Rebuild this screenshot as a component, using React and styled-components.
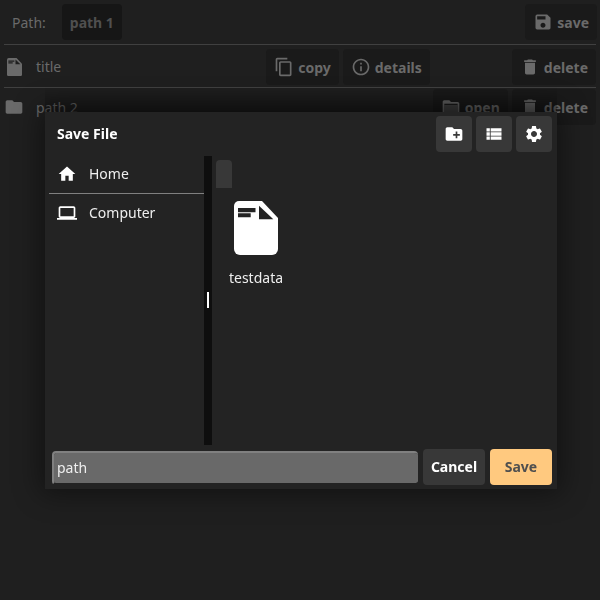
import styled, { createGlobalStyle } from 'styled-components'
import {
  MdContentCopy,
  MdInfoOutline,
  MdDelete,
  MdSave,
  MdFolder,
  MdCreateNewFolder,
  MdViewList,
  MdSettings,
  MdHome,
  MdLaptop,
} from 'react-icons/md'

const GlobalStyle = createGlobalStyle`
  html, body {
    margin: 0;
    height: 100%;
    background: #1f1f1f;
    overflow: hidden;
  }
  body, input, button {
    font-family: "Noto Sans", sans-serif;
  }
`

// Page behind the dialog
const Page = styled.div`
  width: 600px;
  height: 600px;
  box-sizing: border-box;
  padding: 4px 4px 0;
  color: #6a6a6a;
`

const Row = styled.div`
  display: flex;
  align-items: center;
  gap: 4px;
  height: 36px;
`

const Divider = styled.div`
  height: 1px;
  background: #404040;
  margin: ${(p) => p.$m || '0'};
`

const PathLabel = styled.span`
  font-size: 14px;
  margin: 0 12px 0 8px;
`

const BgButton = styled.button`
  display: flex;
  align-items: center;
  gap: 4px;
  height: 36px;
  box-sizing: border-box;
  padding: 0 8px;
  margin-right: ${(p) => p.$mr || '0'};
  border: 0;
  border-radius: 4px;
  background: ${(p) => (p.$dark ? '#161616' : '#1a1a1a')};
  color: ${(p) => (p.$dark ? '#4f4f4f' : '#6a6a6a')};
  font-size: 14px;
  font-weight: 700;
  svg {
    font-size: 20px;
    flex: none;
  }
`

const RowIcon = styled.span`
  display: flex;
  justify-content: center;
  width: 20px;
  font-size: 20px;
`

const RowTitle = styled.span`
  font-size: 14px;
  margin: 0 0 ${(p) => p.$lift || '0'} 8px;
`

const Spacer = styled.div`
  flex: ${(p) => (p.$w ? `0 0 ${p.$w}` : 1)};
`

// Dialog
const DialogLayer = styled.div`
  position: fixed;
  left: 45px;
  top: 112px;
`

const Dialog = styled.div`
  position: relative;
  width: 512px;
  height: 377px;
  display: flex;
  flex-direction: column;
  background: #232323;
  color: #fff;
  box-shadow: 0 0 26px 4px rgba(0, 0, 0, 0.45);
  &::before {
    content: '';
    position: absolute;
    left: 0;
    right: 0;
    top: -25px;
    height: 25px;
    background: linear-gradient(rgba(0, 0, 0, 0), rgba(0, 0, 0, 0.3));
  }
`

const Header = styled.div`
  display: flex;
  align-items: center;
  gap: 4px;
  height: 36px;
  padding: 4px 5px 0 12px;
`

const Title = styled.div`
  flex: 1;
  font-size: 14px;
  font-weight: 700;
  padding-bottom: 2px;
`

const HeadButton = styled.button`
  display: flex;
  align-items: center;
  justify-content: center;
  width: 36px;
  height: 36px;
  padding: 0;
  border: 0;
  border-radius: 4px;
  background: #383838;
  color: #fff;
  font-size: 20px;
`

const Body = styled.div`
  flex: 1;
  display: flex;
  padding: 3px 0 4px 4px;
  min-height: 0;
`

const Sidebar = styled.div`
  width: 155px;
  display: flex;
  flex-direction: column;
`

const Place = styled.div`
  display: flex;
  align-items: center;
  gap: 12px;
  height: 38px;
  padding-left: 8px;
  border-bottom: ${(p) => (p.$line ? '1px solid #808080' : '0')};
  svg {
    font-size: 20px;
    color: #fff;
    flex: none;
  }
`

const PlaceLabel = styled.span`
  font-size: 14px;
  color: #eee;
  padding-bottom: 2px;
`

const Track = styled.div`
  width: 8px;
  height: 289px;
  margin-top: 1px;
  display: flex;
  justify-content: center;
  padding-top: 136px;
  box-sizing: border-box;
  background: #0e0e0e;
`

const Thumb = styled.div`
  width: 2px;
  height: 16px;
  background: #fff;
`

const Files = styled.div`
  flex: 1;
  display: flex;
  flex-direction: column;
  padding: 5px 0 0 4px;
`

const UpButton = styled.div`
  width: 16px;
  height: 28px;
  border-radius: 4px 4px 0 0;
  background: #383838;
`

const FileTile = styled.div`
  width: 80px;
  margin-top: 13px;
  display: flex;
  flex-direction: column;
  align-items: center;
  gap: 13px;
  font-size: 14px;
  color: #eee;
`

const Footer = styled.div`
  display: flex;
  align-items: center;
  gap: 5px;
  height: 36px;
  padding: 0 5px 4px 7px;
`

const PathInput = styled.input`
  flex: 1;
  min-width: 0;
  height: 34px;
  margin-top: 2px;
  box-sizing: border-box;
  padding: 0 0 1px 3px;
  border: 0;
  border-top: 2px solid #808080;
  border-left: 2px solid #808080;
  border-bottom: 2px solid transparent;
  border-radius: 4px;
  background: #696969;
  background-clip: padding-box;
  color: #eee;
  font-size: 14px;
  outline: none;
`

const ActionButton = styled.button`
  width: 62px;
  height: 36px;
  padding: 0 0 2px;
  border: 0;
  border-radius: 4px;
  background: ${(p) => (p.$primary ? '#ffc97f' : '#383838')};
  color: ${(p) => (p.$primary ? '#4f4f4f' : '#fff')};
  font-size: 14px;
  font-weight: 700;
`

function FileIcon({ size, body = '#fff', ink = '#232323' }) {
  return (
    <svg width={size} height={(size * 54) / 44} viewBox="0 0 44 54">
      <path
        d="M5 0H28L44 17V48a6 6 0 0 1-6 6H6a6 6 0 0 1-6-6V5a5 5 0 0 1 5-5Z"
        fill={body}
      />
      <path d="M4 7H21.5V11.3H4ZM4 12.3H16.7V16.3H4Z" fill={ink} />
      <path d="M25 4.7V18.3H39.3Z" fill={ink} />
    </svg>
  )
}

// open folder with a filled front, no package icon has these strokes
function OpenFolderIcon() {
  return (
    <svg width="1em" height="1em" viewBox="0 0 24 24" fill="currentColor">
      <path d="M20 6h-8l-2-2H4c-1.1 0-2 .9-2 2v12c0 1.1.9 2 2 2h16c1.1 0 2-.9 2-2V8c0-1.1-.9-2-2-2zm0 12H4V8h16v10z" />
      <path d="M4 9.5h16V18H4z" opacity="0.55" />
    </svg>
  )
}

export default function App() {
  return (
    <>
      <GlobalStyle />
      <Page>
        <Row>
          <PathLabel>Path:</PathLabel>
          <BgButton $dark>path 1</BgButton>
          <Spacer />
          <BgButton $mr="-1px">
            <MdSave />
            save
          </BgButton>
        </Row>
        <Divider $m="4px 0" />
        <Row>
          <RowIcon>
            <FileIcon size={15} body="#6a6a6a" ink="#1f1f1f" />
          </RowIcon>
          <RowTitle $lift="2px">title</RowTitle>
          <Spacer />
          <BgButton>
            <MdContentCopy />
            copy
          </BgButton>
          <BgButton>
            <MdInfoOutline />
            details
          </BgButton>
          <Spacer $w="74px" />
          <BgButton>
            <MdDelete />
            delete
          </BgButton>
        </Row>
        <Divider $m="2px 0 1px" />
        <Row>
          <RowIcon>
            <MdFolder />
          </RowIcon>
          <RowTitle>path 2</RowTitle>
          <Spacer />
          <BgButton>
            <OpenFolderIcon />
            open
          </BgButton>
          <BgButton>
            <MdDelete />
            delete
          </BgButton>
        </Row>
      </Page>
      <DialogLayer>
        <Dialog>
          <Header>
            <Title>Save File</Title>
            <HeadButton>
              <MdCreateNewFolder />
            </HeadButton>
            <HeadButton>
              <MdViewList />
            </HeadButton>
            <HeadButton>
              <MdSettings />
            </HeadButton>
          </Header>
          <Body>
            <Sidebar>
              <Place $line>
                <MdHome />
                <PlaceLabel>Home</PlaceLabel>
              </Place>
              <Place>
                <MdLaptop />
                <PlaceLabel>Computer</PlaceLabel>
              </Place>
            </Sidebar>
            <Track>
              <Thumb />
            </Track>
            <Files>
              <UpButton />
              <FileTile>
                <FileIcon size={44} />
                testdata
              </FileTile>
            </Files>
          </Body>
          <Footer>
            <PathInput defaultValue="path" />
            <ActionButton>Cancel</ActionButton>
            <ActionButton $primary>Save</ActionButton>
          </Footer>
        </Dialog>
      </DialogLayer>
    </>
  )
}
